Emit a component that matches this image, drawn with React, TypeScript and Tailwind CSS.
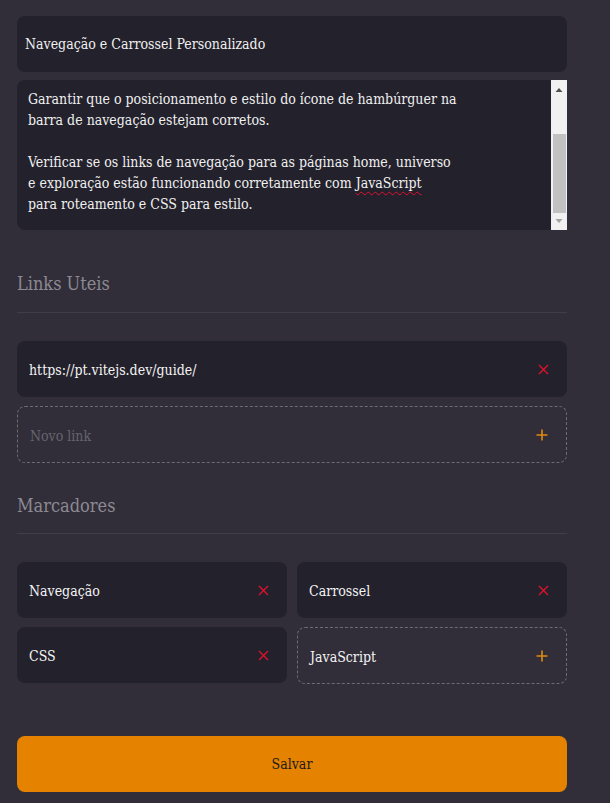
import React from "react";

const font = { fontFamily: "'Roboto Slab', 'DejaVu Serif Condensed', 'DejaVu Serif', serif" };

function XIcon() {
  return (
    <svg width="11" height="11" viewBox="0 0 11 11" className="shrink-0">
      <path d="M1 1 L10 10 M10 1 L1 10" stroke="#e0102f" strokeWidth="1.4" />
    </svg>
  );
}

function PlusIcon() {
  return (
    <svg width="12" height="12" viewBox="0 0 12 12" className="shrink-0">
      <path d="M6 0.5 V11.5 M0.5 6 H11.5" stroke="#e08a10" strokeWidth="1.6" />
    </svg>
  );
}

function Filled({ label }: { label: string }) {
  return (
    <div className="flex h-[56px] items-center justify-between rounded-[8px] bg-[#23212b] pl-3 pr-[18px]">
      <span className="pt-[3px] text-[14px] text-[#f4f4f4]">{label}</span>
      <XIcon />
    </div>
  );
}

function Dashed({ label, placeholder }: { label: string; placeholder?: boolean }) {
  return (
    <div className="flex h-[57px] items-center justify-between rounded-[8px] border border-dashed border-[#6e6b74] pl-3 pr-[18px]">
      <span className={`pt-[3px] text-[14px] ${placeholder ? "text-[#67646d]" : "text-[#f4f4f4]"}`}>{label}</span>
      <PlusIcon />
    </div>
  );
}

export default function App() {
  return (
    <div className="min-h-[803px] w-[610px] bg-[#312e39] px-[17px] pt-[16px]" style={font}>
      <div className="w-[550px]">
        <div className="flex h-[56px] items-center rounded-[8px] bg-[#23212b] px-[8px]">
          <span className="text-[14px] text-[#f0f0f0]">Navegação e Carrossel Personalizado</span>
        </div>
        <div className="mt-[8px] flex h-[150px] overflow-hidden rounded-l-[8px] bg-[#23212b]">
          <div className="flex-1 pl-[11px] pr-[12px] pt-[9px] text-[14px] leading-[21px] text-[#f0f0f0]">
            <p>
              Garantir que o posicionamento e estilo do ícone de hambúrguer na
              <br />
              barra de navegação estejam corretos.
            </p>
            <p className="mt-[21px]">
              Verificar se os links de navegação para as páginas home, universo
              <br />
              e exploração estão funcionando corretamente com{" "}
              <span className="underline decoration-wavy decoration-[#e0102f] decoration-1 underline-offset-[3px]">JavaScript</span>
              <br />
              para roteamento e CSS para estilo.
            </p>
          </div>
          <div className="flex w-[16px] flex-col items-center bg-[#f1f1f1]">
            <svg width="8" height="6" viewBox="0 0 8 6" className="mt-[7px]"><path d="M4 1 L7.5 5 H0.5 Z" fill="#505050" /></svg>
            <div className="mt-[41px] h-[79px] w-[13px] bg-[#c1c1c1]" />
            <div className="flex-1" />
            <svg width="8" height="6" viewBox="0 0 8 6" className="mb-[6px]"><path d="M0.5 1 H7.5 L4 5 Z" fill="#a3a3a3" /></svg>
          </div>
        </div>

        <div className="mt-[42px] text-[18px] leading-[24px] text-[#8c8992]">Links Uteis</div>
        <div className="mt-[16px] h-px bg-[#403d48]" />

        <div className="mt-[28px] flex flex-col gap-[9px]">
          <div className="flex h-[56px] items-center justify-between rounded-[8px] bg-[#23212b] pl-3 pr-[18px]">
            <span className="pt-[3px] text-[14px] text-[#f4f4f4]">https://pt.vitejs.dev/guide/</span>
            <XIcon />
          </div>
          <Dashed label="Novo link" placeholder />
        </div>

        <div className="mt-[31px] text-[18px] leading-[24px] text-[#8c8992]">Marcadores</div>
        <div className="mt-[15px] h-px bg-[#403d48]" />

        <div className="mt-[28px] grid grid-cols-2 gap-x-[10px] gap-y-[9px]">
          <Filled label="Navegação" />
          <Filled label="Carrossel" />
          <Filled label="CSS" />
          <Dashed label="JavaScript" />
        </div>

        <button className="mt-[52px] flex h-[56px] w-full items-center justify-center rounded-[8px] bg-[#e58300] text-[14px] text-[#1a1a1a]">
          Salvar
        </button>
      </div>
    </div>
  );
}
